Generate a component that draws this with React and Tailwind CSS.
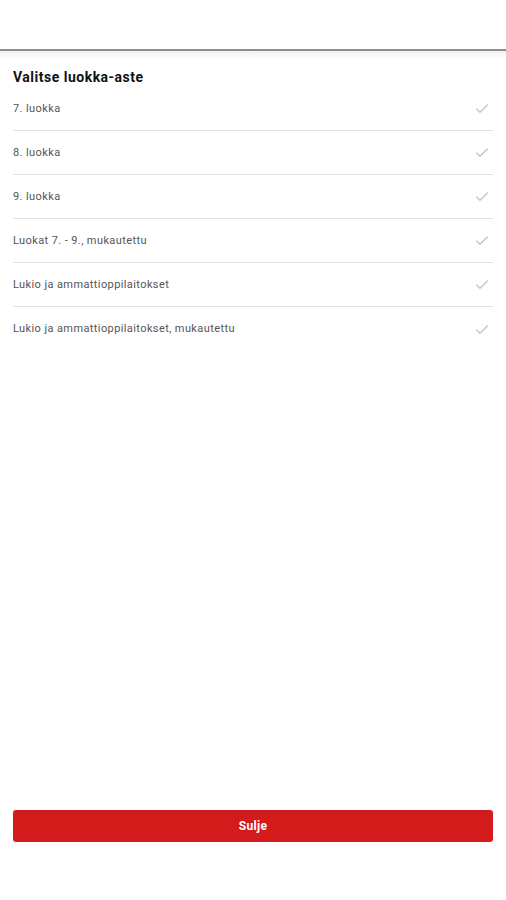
import React from "react";
import { Check } from "lucide-react";

const grades = [
  "7. luokka",
  "8. luokka",
  "9. luokka",
  "Luokat 7. - 9., mukautettu",
  "Lukio ja ammattioppilaitokset",
  "Lukio ja ammattioppilaitokset, mukautettu",
];

export default function App() {
  return (
    <div className="flex flex-col h-[900px] bg-white" style={{ fontFamily: "Roboto, 'Liberation Sans', sans-serif" }}>
      {/* top bar */}
      <div className="h-[51px] bg-white border-b-2 border-[#8c8c8c]" />
      <div className="h-[8px] bg-gradient-to-b from-[#f0f0f0] to-white" />

      <div className="px-[13px]">
        <h1 className="text-[14px] leading-[20px] font-bold tracking-[0.5px] text-[#111] mt-[8px]">Valitse luokka-aste</h1>
        <ul>
          {grades.map((g, i) => (
            <li
              key={g}
              className={
                i < grades.length - 1
                  ? "h-[44px] pt-[1px] flex items-center justify-between border-b border-[#e2e2e2]"
                  : "h-[44px] pt-[1px] flex items-center justify-between"
              }
            >
              <span className="text-[11px] tracking-[0.4px] text-[#555]">{g}</span>
              <Check size={16} strokeWidth={2} className="text-[#c4c4c4] mr-[3px]" />
            </li>
          ))}
        </ul>
      </div>

      <div className="mt-auto px-[13px] mb-[58px]">
        <button className="w-full h-[32px] rounded-[3px] bg-[#d31b1b] text-white text-[12px] font-bold tracking-[0.3px]">
          Sulje
        </button>
      </div>
    </div>
  );
}
